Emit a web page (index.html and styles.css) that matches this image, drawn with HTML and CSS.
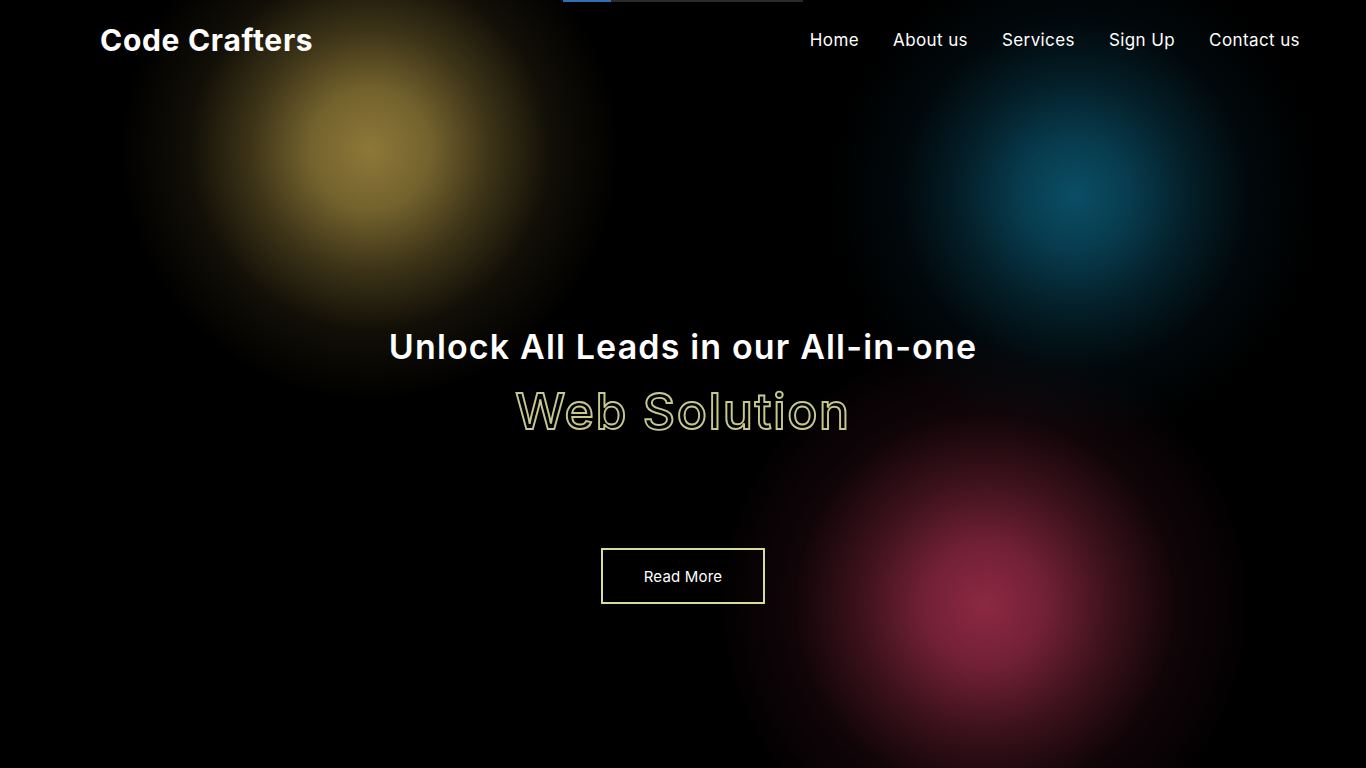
FILE: index.html
```html
<!DOCTYPE html>
<html lang="en">
<head>
<meta charset="utf-8">
<title>Code Crafters</title>
<link rel="stylesheet" href="styles.css">
</head>
<body>
<div class="topline"><span class="topline-fill"></span></div>
<header class="header">
  <div class="logo">Code Crafters</div>
  <nav class="nav">
    <a href="#">Home</a>
    <a href="#">About us</a>
    <a href="#">Services</a>
    <a href="#">Sign Up</a>
    <a href="#">Contact us</a>
  </nav>
</header>
<main class="hero">
  <h1 class="title">Unlock All Leads in our All-in-one</h1>
  <h2 class="outline">Web Solution</h2>
  <a class="btn" href="#">Read More</a>
</main>
</body>
</html>
```
FILE: styles.css
```css
* { box-sizing: border-box; }
html, body { margin: 0; height: 100%; }
body {
  width: 1366px;
  height: 768px;
  overflow: hidden;
  position: relative;
  font-family: "Inter", "Noto Sans", sans-serif;
  color: #fff;
  background-color: #000;
  background-image:
    radial-gradient(circle at 370px 150px, rgba(142,120,56,1) 0px, rgba(132,112,52,0.88) 60px, rgba(104,88,40,0.58) 120px, rgba(64,54,24,0.28) 180px, rgba(0,0,0,0) 250px),
    radial-gradient(circle at 1075px 195px, rgba(10,78,102,1) 0px, rgba(9,70,92,0.85) 55px, rgba(7,55,72,0.55) 115px, rgba(4,33,44,0.25) 175px, rgba(0,0,0,0) 245px),
    radial-gradient(circle at 985px 605px, rgba(140,40,66,1) 0px, rgba(130,37,61,0.88) 60px, rgba(104,30,48,0.58) 125px, rgba(62,17,29,0.28) 190px, rgba(0,0,0,0) 270px);
}
.topline {
  position: absolute;
  top: 0;
  left: 563px;
  width: 240px;
  height: 2px;
  background: #2a2a2a;
}
.topline-fill {
  display: block;
  width: 48px;
  height: 100%;
  background: #2f6fb5;
}
.header {
  display: flex;
  justify-content: space-between;
  align-items: center;
  padding: 20px 66px 0 100px;
  height: 60px;
}
.logo {
  font-size: 30px;
  font-weight: 700;
  letter-spacing: 0.7px;
  line-height: 40px;
}
.nav {
  display: flex;
  gap: 34px;
}
.nav a {
  color: #fff;
  text-decoration: none;
  font-size: 17px;
  font-weight: 400;
  letter-spacing: 0.4px;
  line-height: 40px;
}
.hero {
  display: flex;
  flex-direction: column;
  align-items: center;
  padding-top: 265px;
}
.title {
  margin: 0;
  font-size: 34px;
  font-weight: 600;
  line-height: 44px;
  letter-spacing: 1.15px;
}
.outline {
  margin: 12px 0 0;
  font-size: 50px;
  font-weight: 500;
  line-height: 60px;
  color: transparent;
  -webkit-text-stroke: 1.9px #c6c98b;
  letter-spacing: 1.6px;
}
.btn {
  margin-top: 107px;
  width: 164px;
  height: 56px;
  display: flex;
  align-items: center;
  justify-content: center;
  border: 2px solid #d3df9a;
  color: #fff;
  text-decoration: none;
  font-size: 15px;
  font-weight: 400;
  letter-spacing: 0.2px;
}
```
